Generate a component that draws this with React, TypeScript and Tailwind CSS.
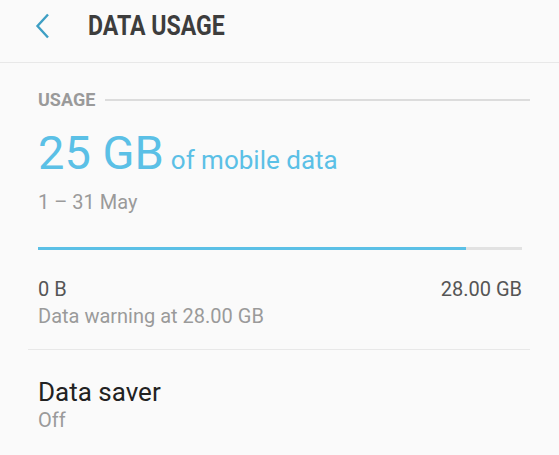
import React from "react";

export default function App() {
  return (
    <div className="w-[559px] h-[455px] overflow-hidden bg-[#fafafa]" style={{ fontFamily: "Roboto, 'Noto Sans', sans-serif" }}>
      <div className="h-[63px] flex items-start border-b border-[#e8e8e8]">
        <div className="w-[88px] pl-[34px] pt-[13px]">
          <svg width="18" height="26" viewBox="0 0 18 26">
            <path d="M14 1.5 L3.5 13 L14 24.5" fill="none" stroke="#3e9fc4" strokeWidth="2.4" />
          </svg>
        </div>
        <div className="pt-[13px] text-[27px] font-bold text-[#3d3d3d] leading-none origin-left scale-x-[0.855]">DATA USAGE</div>
      </div>
      <div className="pl-[38px] pr-[29px]">
        <div className="flex items-center gap-[10px] pt-[28px]">
          <div className="text-[18px] font-bold text-[#9a9a9a] leading-none">USAGE</div>
          <div className="flex-1 h-[2px] bg-[#dcdcdc]" />
        </div>
        <div className="flex items-baseline mt-[20px] text-[#5bc0e6]">
          <span className="text-[47px] leading-none">25 GB</span>
          <span className="text-[26px] leading-none ml-[7px]">of mobile data</span>
        </div>
        <div className="text-[20px] text-[#9a9a9a] mt-[16px] leading-none">1 – 31 May</div>
        <div className="mt-[35px] mr-[8px] h-[3px] bg-[#e2e2e2] flex">
          <div className="h-full bg-[#5bc0e6]" style={{ width: "88.4%" }} />
        </div>
        <div className="flex justify-between mr-[8px] mt-[29px] text-[20px] text-[#555] leading-none">
          <span>0 B</span>
          <span>28.00 GB</span>
        </div>
        <div className="text-[20px] text-[#9a9a9a] mt-[7px] leading-none">Data warning at 28.00 GB</div>
      </div>
      <div className="ml-[28px] mr-[29px] mt-[23px] h-px bg-[#e8e8e8]" />
      <div className="pl-[38px] pt-[29px]">
        <div className="text-[26px] text-[#222] leading-none">Data saver</div>
        <div className="text-[20px] text-[#9a9a9a] mt-[5px] leading-none">Off</div>
      </div>
    </div>
  );
}
